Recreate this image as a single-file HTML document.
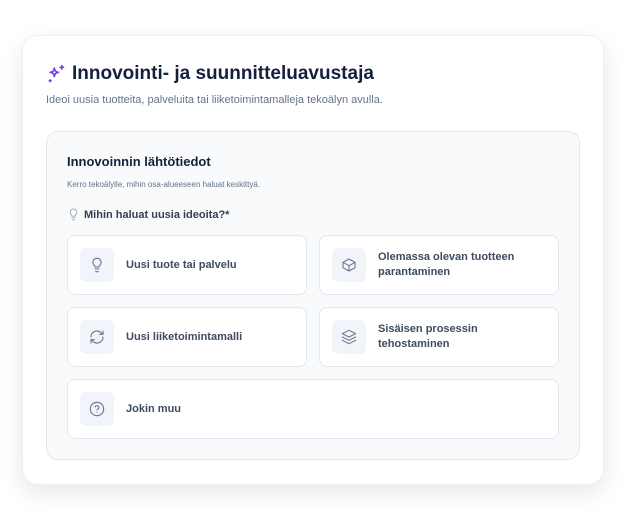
<!DOCTYPE html>
<html><head><meta charset="utf-8"><style>
*{box-sizing:border-box;margin:0;padding:0}
body{width:633px;height:527px;background:#fff;font-family:"Liberation Sans",sans-serif;position:relative;overflow:hidden}
.card{position:absolute;left:22px;top:35px;width:582px;height:450px;background:#fff;border:1px solid #eef0f7;border-radius:16px;box-shadow:0 8px 24px rgba(15,23,42,.10)}
.title{position:absolute;left:46px;top:63px;font-size:19px;font-weight:bold;color:#14213d;display:flex;align-items:center;gap:6px}
.sub{position:absolute;left:46px;top:94px;font-size:11px;color:#64748b}
.panel{position:absolute;left:46px;top:131px;width:534px;height:329px;background:#f8fafc;border:1px solid #e2e8f0;border-radius:12px}
.pt{position:absolute;left:67px;top:154px;font-size:13px;font-weight:bold;color:#14213d}
.ps{position:absolute;left:67px;top:180px;font-size:8px;color:#64748b}
.q{position:absolute;left:67px;top:208px;font-size:11px;font-weight:bold;color:#334155;display:flex;align-items:center;gap:4px}
.b{position:absolute;background:#fff;border:1px solid #e2e8f0;border-radius:8px;display:flex;align-items:center;padding-left:12px;font-size:11px;font-weight:bold;color:#3f4b5e;line-height:15px}
.ic{width:34px;height:34px;border-radius:6px;background:#f1f5f9;display:flex;align-items:center;justify-content:center;margin-right:12px;flex:none}
svg{fill:none;stroke:#64748b;stroke-width:1.6;stroke-linecap:round;stroke-linejoin:round}
</style></head><body>
<div class="card"></div>
<div class="title"><svg width="20" height="20" viewBox="0 0 24 24" style="stroke:#7c3aed;stroke-width:2"><path d="M10 5c.6 3.5 1.5 4.4 5 5-3.5.6-4.4 1.5-5 5-.6-3.5-1.5-4.4-5-5 3.5-.6 4.4-1.5 5-5z"/><path d="M19 2v4M17 4h4M5 19v2M4 20h2"/></svg>Innovointi- ja suunnitteluavustaja</div>
<div class="sub">Ideoi uusia tuotteita, palveluita tai liiketoimintamalleja tekoälyn avulla.</div>
<div class="panel"></div>
<div class="pt">Innovoinnin lähtötiedot</div>
<div class="ps">Kerro tekoälylle, mihin osa-alueeseen haluat keskittyä.</div>
<div class="q"><svg width="13" height="13" viewBox="0 0 24 24" style="stroke:#94a3b8"><path d="M9 18h6M10 22h4M12 2a6 6 0 0 0-4 10.5c.8.8 1 1.5 1 2.5h6c0-1 .2-1.7 1-2.5A6 6 0 0 0 12 2z"/></svg>Mihin haluat uusia ideoita?*</div>

<div class="b" style="left:67px;top:235px;width:240px;height:60px"><div class="ic"><svg width="16" height="16" viewBox="0 0 24 24"><path d="M9 18h6M10 22h4M12 2a6 6 0 0 0-4 10.5c.8.8 1 1.5 1 2.5h6c0-1 .2-1.7 1-2.5A6 6 0 0 0 12 2z"/></svg></div>Uusi tuote tai palvelu</div>
<div class="b" style="left:319px;top:235px;width:240px;height:60px"><div class="ic"><svg width="16" height="16" viewBox="0 0 24 24"><path d="M21 8l-9-5-9 5v8l9 5 9-5z"/><path d="M3 8l9 5 9-5M12 13v8"/></svg></div>Olemassa olevan tuotteen<br>parantaminen</div>
<div class="b" style="left:67px;top:307px;width:240px;height:60px"><div class="ic"><svg width="16" height="16" viewBox="0 0 24 24"><path d="M3 12a9 9 0 0 1 15-6.7L21 8M21 3v5h-5M21 12a9 9 0 0 1-15 6.7L3 16M3 21v-5h5"/></svg></div>Uusi liiketoimintamalli</div>
<div class="b" style="left:319px;top:307px;width:240px;height:60px"><div class="ic"><svg width="16" height="16" viewBox="0 0 24 24"><path d="M12 2l10 5-10 5L2 7z"/><path d="M2 12l10 5 10-5M2 17l10 5 10-5"/></svg></div>Sisäisen prosessin<br>tehostaminen</div>
<div class="b" style="left:67px;top:379px;width:492px;height:60px"><div class="ic"><svg width="16" height="16" viewBox="0 0 24 24"><circle cx="12" cy="12" r="10"/><path d="M9.1 9a3 3 0 0 1 5.8 1c0 2-3 3-3 3M12 17h.01"/></svg></div>Jokin muu</div>
</body></html>
